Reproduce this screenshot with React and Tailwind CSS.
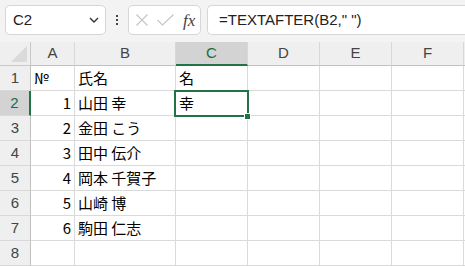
const cols = [
  { key: "A", w: 44 },
  { key: "B", w: 101 },
  { key: "C", w: 72 },
  { key: "D", w: 72 },
  { key: "E", w: 72 },
  { key: "F", w: 72 },
];

const rows = [
  ["№", "氏名", "名"],
  ["1", "山田 幸", "幸"],
  ["2", "金田 こう", ""],
  ["3", "田中 伝介", ""],
  ["4", "岡本 千賀子", ""],
  ["5", "山崎 博", ""],
  ["6", "駒田 仁志", ""],
  ["", "", ""],
];

const cellFont = {
  fontFamily: '"Noto Sans CJK JP", "Liberation Sans", sans-serif',
};

function Toolbar() {
  return (
    <div className="flex h-[42px] items-start gap-0 bg-[#f3f3f3] pt-[5px] pl-[5px]">
      <div className="flex h-[30px] w-[101px] items-center justify-between rounded-[5px] border border-[#d6d6d6] bg-white pl-[7px] pr-[6px]">
        <span className="text-[15px] text-[#222]">C2</span>
        <svg width="10" height="6" viewBox="0 0 10 6">
          <path d="M1 1 L5 5 L9 1" fill="none" stroke="#333" strokeWidth="1.4" />
        </svg>
      </div>
      <div className="flex h-[30px] w-[22px] flex-col items-center justify-center gap-[2px]">
        <span className="h-[2px] w-[2px] bg-[#444]" />
        <span className="h-[2px] w-[2px] bg-[#444]" />
        <span className="h-[2px] w-[2px] bg-[#444]" />
      </div>
      <div className="flex h-[30px] w-[73px] items-center rounded-[5px] border border-[#d6d6d6] bg-white pl-[5px]">
        <svg width="14" height="12" viewBox="0 0 14 12" className="ml-[1px]">
          <path d="M1.5 0.5 L12.5 11.5 M12.5 0.5 L1.5 11.5" stroke="#c4c4c4" strokeWidth="1.1" />
        </svg>
        <svg width="17" height="12" viewBox="0 0 17 12" className="ml-[8px]">
          <path d="M0.5 6 L5.5 11 L16.5 0.5" fill="none" stroke="#c4c4c4" strokeWidth="1.1" />
        </svg>
        <span
          className="ml-[9px] text-[17px] italic leading-none text-[#444]"
          style={{ fontFamily: '"Liberation Serif", serif' }}
        >
          fx
        </span>
      </div>
      <div className="ml-[6px] flex h-[30px] flex-1 items-center rounded-l-[5px] border border-r-0 border-[#d6d6d6] bg-white pl-[11px]">
        <span className="text-[15px] text-[#222]">=TEXTAFTER(B2," ")</span>
      </div>
    </div>
  );
}

export default function App() {
  return (
    <div
      className="h-[266px] w-[465px] overflow-hidden bg-white"
      style={{ fontFamily: '"Liberation Sans", "Noto Sans", sans-serif' }}
    >
      <Toolbar />
      <div className="relative">
        <div className="flex h-[24px]">
          <div className="relative w-[31px] shrink-0 border-r border-b border-[#c8c8c8] bg-[#efefef]">
            <svg width="16" height="16" viewBox="0 0 16 16" className="absolute right-[3px] bottom-[3px]">
              <path d="M16 0 L16 16 L0 16 Z" fill="#dadada" />
            </svg>
          </div>
          {cols.map((c) => (
            <div
              key={c.key}
              style={{ width: c.w }}
              className={
                c.key === "C"
                  ? "flex shrink-0 items-center justify-center border-r border-b-2 border-r-[#d8d8d8] border-b-[#217346] bg-[#d3d3d3] text-[15px] text-[#1d6b40]"
                  : "flex shrink-0 items-center justify-center border-r border-b border-r-[#d8d8d8] border-b-[#c0c0c0] bg-[#efefef] text-[15px] text-[#444]"
              }
            >
              {c.key}
            </div>
          ))}
          <div className="flex-1 border-b border-[#c0c0c0] bg-[#efefef]" />
        </div>
        {rows.map((r, i) => (
          <div key={i} className="flex h-[25px]" style={cellFont}>
            <div
              className={
                i === 1
                  ? "flex w-[31px] shrink-0 items-center justify-center border-r-2 border-b border-r-[#217346] border-b-[#d8d8d8] bg-[#d3d3d3] text-[15px] text-[#1d6b40]"
                  : "flex w-[31px] shrink-0 items-center justify-center border-r border-b border-r-[#c0c0c0] border-b-[#d8d8d8] bg-[#efefef] text-[15px] text-[#444]"
              }
              style={{ fontFamily: '"Liberation Sans", sans-serif' }}
            >
              {i + 1}
            </div>
            <div
              className={
                "flex w-[44px] shrink-0 items-center border-r border-b border-[#dadada] px-[3px] text-[15px] text-black " +
                (i === 0 ? "justify-start" : "justify-end")
              }
            >
              {r[0]}
            </div>
            <div className="flex w-[101px] shrink-0 items-center border-r border-b border-[#dadada] px-[3px] text-[15px] text-black">
              {r[1]}
            </div>
            <div className="flex w-[72px] shrink-0 items-center border-r border-b border-[#dadada] px-[3px] text-[15px] text-black">
              {r[2]}
            </div>
            <div className="w-[72px] shrink-0 border-r border-b border-[#dadada]" />
            <div className="w-[72px] shrink-0 border-r border-b border-[#dadada]" />
            <div className="w-[72px] shrink-0 border-r border-b border-[#dadada]" />
            <div className="flex-1 border-b border-[#dadada]" />
          </div>
        ))}
        <div className="pointer-events-none absolute top-[48px] left-[174px] h-[27px] w-[75px] border-2 border-[#217346]" />
        <div className="pointer-events-none absolute top-[71px] left-[244px] h-[7px] w-[7px] border border-white bg-[#217346]" />
      </div>
    </div>
  );
}
